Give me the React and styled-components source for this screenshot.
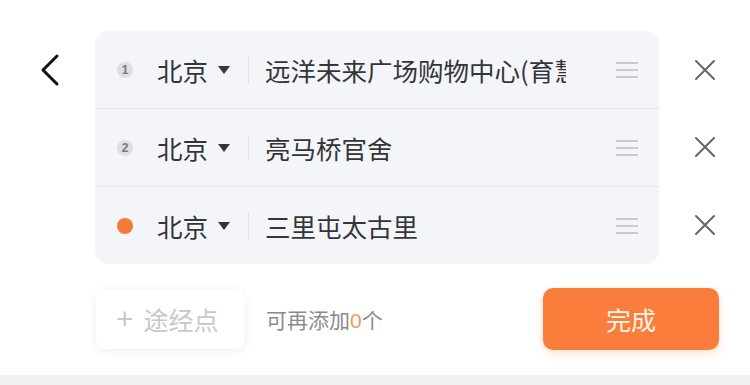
import styled, { createGlobalStyle } from "styled-components";

const GlobalStyle = createGlobalStyle`
  html, body {
    margin: 0;
    padding: 0;
    background: #ffffff;
    font-family: "Noto Sans CJK SC", "Noto Sans", sans-serif;
  }
`;

const stops = [
  { id: 1, city: "北京", name: "远洋未来广场购物中心(育慧里店)" },
  { id: 2, city: "北京", name: "亮马桥官舍" },
  { id: 3, city: "北京", name: "三里屯太古里", last: true },
];

const App = () => {
  return (
    <Page>
      <GlobalStyle />
      <Top>
        <BackButton>
          <svg width="22" height="34" viewBox="0 0 22 34">
            <path d="M18 3 L4 17 L18 31" fill="none" stroke="#111" strokeWidth="3" strokeLinecap="round" strokeLinejoin="round" />
          </svg>
        </BackButton>

        <Panel>
          {stops.map((s) => (
            <Row key={s.id}>
              {s.last ? <Dot /> : <Badge>{s.id}</Badge>}
              <City>
                {s.city}
                <Caret />
              </City>
              <Sep />
              <Address>{s.name}</Address>
              <Handle>
                <span />
                <span />
                <span />
              </Handle>
            </Row>
          ))}
        </Panel>

        <CloseColumn>
          {stops.map((s) => (
            <CloseButton key={s.id}>
              <svg width="22" height="22" viewBox="0 0 22 22">
                <path d="M2 2 L20 20 M20 2 L2 20" stroke="#666" strokeWidth="2" strokeLinecap="round" />
              </svg>
            </CloseButton>
          ))}
        </CloseColumn>
      </Top>

      <Footer>
        <AddButton>
          <Plus>+</Plus>途经点
        </AddButton>
        <Hint>
          可再添加<em>0</em>个
        </Hint>
        <Done>完成</Done>
      </Footer>

      <BottomStrip />
    </Page>
  );
};

const Page = styled.div`
  width: 750px;
  height: 385px;
  display: flex;
  flex-direction: column;
  overflow: hidden;
  background: #fff;
`;

const Top = styled.div`
  display: flex;
  align-items: flex-start;
  padding-top: 31px;
`;

const BackButton = styled.div`
  width: 95px;
  height: 78px;
  display: flex;
  align-items: center;
  padding-left: 39px;
  box-sizing: border-box;
`;

const Panel = styled.div`
  width: 564px;
  background: #f4f5f8;
  border-radius: 14px;
  overflow: hidden;
`;

const Row = styled.div`
  height: 77px;
  display: flex;
  align-items: center;
  padding-left: 18px;
  & + & {
    border-top: 1.5px solid #e6e8ec;
  }
`;

const Badge = styled.div`
  width: 16px;
  height: 16px;
  border-radius: 50%;
  background: #dcdfe4;
  color: #777a80;
  font-family: "Liberation Sans", sans-serif;
  font-size: 12px;
  font-weight: bold;
  display: flex;
  align-items: center;
  justify-content: center;
  margin-left: 4px;
`;

const Dot = styled.div`
  width: 16px;
  height: 16px;
  border-radius: 50%;
  background: #f47a3c;
  margin-left: 4px;
`;

const City = styled.div`
  display: flex;
  align-items: center;
  margin-left: 24px;
  font-size: 25.5px;
  color: #333538;
`;

const Caret = styled.span`
  width: 0;
  height: 0;
  margin-left: 10px;
  border-left: 6.5px solid transparent;
  border-right: 6.5px solid transparent;
  border-top: 8px solid #333538;
`;

const Sep = styled.div`
  width: 1px;
  height: 26px;
  background: #e0e2e6;
  margin-left: 18px;
`;

const Address = styled.div`
  flex: 1;
  margin-left: 16px;
  margin-right: 50px;
  font-size: 25.5px;
  color: #333538;
  white-space: nowrap;
  overflow: hidden;
`;

const Handle = styled.div`
  display: flex;
  flex-direction: column;
  gap: 5px;
  margin-right: 21px;
  span {
    display: block;
    width: 22px;
    height: 2px;
    background: #c9cbcf;
  }
`;

const CloseColumn = styled.div`
  display: flex;
  flex-direction: column;
  margin-left: 35px;
`;

const CloseButton = styled.div`
  height: 77.5px;
  display: flex;
  align-items: center;
`;

const Footer = styled.div`
  display: flex;
  align-items: center;
  padding: 24px 31px 0 96px;
`;

const AddButton = styled.div`
  width: 149px;
  height: 60px;
  border-radius: 10px;
  background: #fff;
  box-shadow: 0 2px 10px rgba(0, 0, 0, 0.07);
  display: flex;
  align-items: center;
  padding-left: 20px;
  box-sizing: border-box;
  font-size: 25px;
  color: #c7c8cb;
`;

const Plus = styled.span`
  font-family: "Liberation Sans", sans-serif;
  font-size: 30px;
  font-weight: 300;
  margin-right: 10px;
  line-height: 1;
`;

const Hint = styled.div`
  margin-left: 21px;
  font-size: 21px;
  color: #8a8b8e;
  flex: 1;
  em {
    font-style: normal;
    color: #f29a5e;
    font-family: "Liberation Sans", sans-serif;
  }
`;

const Done = styled.div`
  width: 176px;
  height: 62px;
  border-radius: 10px;
  background: #fb7d3b;
  box-shadow: 0 3px 8px rgba(251, 125, 59, 0.25);
  color: #fff6ea;
  font-size: 25px;
  display: flex;
  align-items: center;
  justify-content: center;
`;

const BottomStrip = styled.div`
  margin-top: auto;
  height: 10px;
  background: #f0f0f0;
`;

export default App;
